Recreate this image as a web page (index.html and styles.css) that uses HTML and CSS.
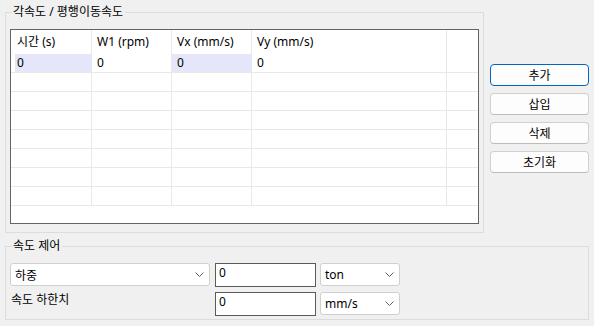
FILE: index.html
```html
<!DOCTYPE html>
<html lang="ko">
<head>
  <meta charset="UTF-8">
  <title>각속도 / 평행이동속도</title>
  <link rel="stylesheet" href="styles.css">
</head>
<body>
  <div class="window">
    <div class="top">
      <!-- 속도 테이블 -->
      <fieldset class="group group-table">
        <legend>각속도 / 평행이동속도</legend>
        <div class="grid">
          <div class="row head">
            <div class="cell">시간 (s)</div>
            <div class="cell">W1 (rpm)</div>
            <div class="cell">Vx (mm/s)</div>
            <div class="cell">Vy (mm/s)</div>
            <div class="cell"></div>
          </div>
          <div class="row">
            <div class="cell sel first">0</div>
            <div class="cell">0</div>
            <div class="cell sel">0</div>
            <div class="cell">0</div>
            <div class="cell"></div>
          </div>
          <div class="row"><div class="cell"></div><div class="cell"></div><div class="cell"></div><div class="cell"></div><div class="cell"></div></div>
          <div class="row"><div class="cell"></div><div class="cell"></div><div class="cell"></div><div class="cell"></div><div class="cell"></div></div>
          <div class="row"><div class="cell"></div><div class="cell"></div><div class="cell"></div><div class="cell"></div><div class="cell"></div></div>
          <div class="row"><div class="cell"></div><div class="cell"></div><div class="cell"></div><div class="cell"></div><div class="cell"></div></div>
          <div class="row"><div class="cell"></div><div class="cell"></div><div class="cell"></div><div class="cell"></div><div class="cell"></div></div>
          <div class="row"><div class="cell"></div><div class="cell"></div><div class="cell"></div><div class="cell"></div><div class="cell"></div></div>
          <div class="row"><div class="cell"></div><div class="cell"></div><div class="cell"></div><div class="cell"></div><div class="cell"></div></div>
        </div>
      </fieldset>

      <!-- 버튼 -->
      <div class="buttons">
        <button class="btn default">추가</button>
        <button class="btn">삽입</button>
        <button class="btn">삭제</button>
        <button class="btn">초기화</button>
      </div>
    </div>

    <!-- 속도 제어 -->
    <fieldset class="group group-ctrl">
      <legend>속도 제어</legend>
      <div class="ctrl-row">
        <div class="combo wide">
          <span>하중</span>
          <svg class="chev" width="9" height="5" viewBox="0 0 9 5"><path d="M0.5 0.5 L4.5 4.5 L8.5 0.5" fill="none" stroke="#606060" stroke-width="1"/></svg>
        </div>
        <div class="textbox">0</div>
        <div class="combo unit">
          <span>ton</span>
          <svg class="chev" width="9" height="5" viewBox="0 0 9 5"><path d="M0.5 0.5 L4.5 4.5 L8.5 0.5" fill="none" stroke="#606060" stroke-width="1"/></svg>
        </div>
      </div>
      <div class="ctrl-row second">
        <div class="label">속도 하한치</div>
        <div class="textbox">0</div>
        <div class="combo unit">
          <span>mm/s</span>
          <svg class="chev" width="9" height="5" viewBox="0 0 9 5"><path d="M0.5 0.5 L4.5 4.5 L8.5 0.5" fill="none" stroke="#606060" stroke-width="1"/></svg>
        </div>
      </div>
    </fieldset>
  </div>
</body>
</html>
```

FILE: styles.css
```css
* {
  box-sizing: border-box;
}
body {
  margin: 0;
  background: #f0f0f0;
  font-family: "Noto Sans", "Noto Sans CJK KR", sans-serif;
  font-size: 12px;
  color: #000;
}
.window {
  width: 594px;
  height: 326px;
  padding: 5px 0 0 5px;
  overflow: hidden;
}
.top {
  display: flex;
  align-items: flex-start;
}

/* Gruppenrahmen */
.group {
  margin: 0;
  min-width: 0;
  border: 1px solid #dcdcdc;
}
.group legend {
  margin-left: 2px;
  padding: 0 2px 0 1px;
  line-height: 14px;
  font-size: 12px;
}
.group-table {
  width: 479px;
  padding: 10px 4px 8px 4px;
}
.group-ctrl {
  width: 584px;
  margin-top: 6px;
  padding: 10px 4px 3px 4px;
}

/* Tabelle */
.grid {
  height: 195px;
  border: 1px solid #646464;
  background: #fff;
  overflow: hidden;
}
.row {
  display: grid;
  grid-template-columns: 81px 80px 80px 195px 1fr;
  height: 19px;
}
.row .cell {
  border-right: 1px solid #e8e8e8;
  border-bottom: 1px solid #e8e8e8;
  padding-left: 5px;
  line-height: 18px;
  white-space: nowrap;
}
.row .cell:first-child {
  padding-left: 6px;
}
.row .cell:last-child {
  border-right: none;
}
.row.head {
  height: 24px;
}
.row.head .cell {
  border-bottom: none;
  line-height: 24px;
}
.cell.sel {
  background: #e6e6fa;
}
.cell.sel.first {
  background: linear-gradient(to right, #fff 4px, #e6e6fa 4px);
}

/* Knöpfe */
.buttons {
  display: flex;
  flex-direction: column;
  gap: 7px;
  margin-left: 6px;
  padding-top: 59px;
}
.btn {
  width: 99px;
  height: 22px;
  padding: 0;
  font-family: inherit;
  font-size: 12px;
  color: #000;
  background: #fdfdfd;
  border: 1px solid #d0d0d0;
  border-bottom-color: #bcbcbc;
  border-radius: 4px;
}
.btn.default {
  border: 1px solid #0067c0;
}

/* Steuerzeilen */
.ctrl-row {
  display: flex;
  align-items: flex-start;
}
.ctrl-row.second {
  margin-top: 5px;
}
.combo {
  height: 23px;
  display: flex;
  align-items: center;
  justify-content: space-between;
  padding: 0 5px 0 4px;
  background: #fff;
  border: 1px solid #d0d0d0;
  border-radius: 3px;
}
.combo.wide {
  width: 200px;
  margin-right: 5px;
}
.combo.unit {
  width: 80px;
  margin-left: 4px;
}
.chev {
  display: block;
}
.textbox {
  width: 101px;
  height: 24px;
  padding: 1px 0 0 3px;
  line-height: 16px;
  background: #fff;
  border: 1px solid #5a5a5a;
}
.label {
  width: 200px;
  margin-right: 5px;
  padding: 1px 0 0 1px;
  line-height: 14px;
}
```
